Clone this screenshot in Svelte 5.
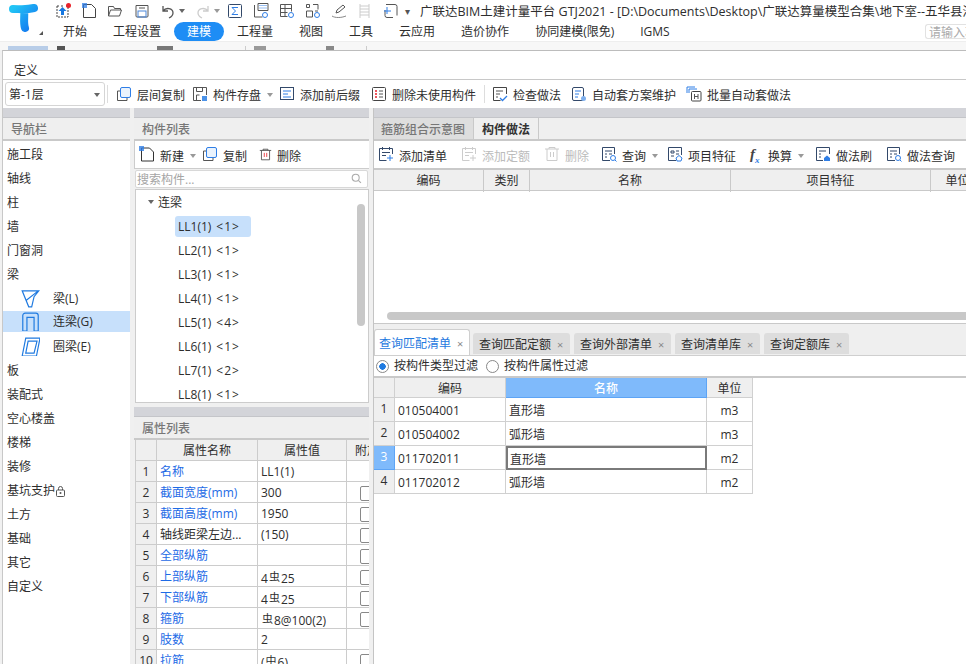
<script>
  const icon = {
    up: '<path d="M2 3h2M6 3h3M11 3h2M2 3v11h11V3" fill="none" stroke="#444" stroke-dasharray="2 1"/><path d="M7.500 4l4 4H9v4H6V8H3.500z" fill="#1677e0"/><circle cx="13.500" cy="2.500" r="2.500" fill="#e8212a"/>',
    file: '<path d="M2.500 1.500h8l4 4v9h-12z" fill="none" stroke="#444"/><rect x="1" y="0" width="5" height="5" fill="#2f7ee6" opacity=".75"/>',
    folder: '<path d="M1.500 13V3.500h5l1 2h6V7M1.500 13l2-6h11l-2 6z" fill="none" stroke="#555"/>',
    save: '<path d="M2 2.500h12v10.500a1 1 0 0 1-1 1H3a1 1 0 0 1-1-1z" fill="none" stroke="#555"/><rect x="4" y="8" width="8" height="6" fill="none" stroke="#4b86d8"/><path d="M5 5h6" stroke="#555"/>',
    undo: '<path d="M3 3v5h5M3 8c3-4 10-3 10 2 0 2-2 4-4 5" fill="none" stroke="#555" stroke-width="1.300"/>',
    redo: '<path d="M13 3v5H8M13 8C10 4 3 5 3 10c0 2 2 4 4 5" fill="none" stroke="#ccc" stroke-width="1.300"/>',
    sigma: '<rect x="1.500" y="1.500" width="13" height="13" rx="1" fill="none" stroke="#33496a"/><path d="M11 4.500H5l3.500 3.500L5 11.500h6" fill="none" stroke="#2f7ee6"/>',
    calc: '<path d="M1.500 2v12h8M5 .5h10v7H5z" fill="none" stroke="#555"/><path d="M6.500 2.500h7M6.500 5h7" stroke="#2f7ee6" stroke-dasharray="1 1"/><circle cx="12" cy="12" r="2.500" fill="none" stroke="#2f7ee6"/>',
    grid: '<path d="M1.500 1.500h11v7M1.500 1.500v12h7M1.500 5.500h11M1.500 9.500h7M6 1.500v12" fill="none" stroke="#555"/><circle cx="12" cy="12" r="2.500" fill="none" stroke="#2f7ee6"/>',
    tree: '<path d="M8 1.500h5v5M1.500 8h6v6h-6zM1.500 1.500h3v3h-3zM10 8h3" fill="none" stroke="#555"/><circle cx="12" cy="12" r="2.500" fill="none" stroke="#2f7ee6"/>',
    pen: '<path d="M1 13c3 2 9 2 14 0" fill="none" stroke="#888"/><path d="M5 10l1-3 6-5 2 2-6 5z" fill="none" stroke="#555"/>',
    ladder: '<path d="M3 1v14M12 1v14M3 3h9M3 6h9M3 9h9M3 12h9" fill="none" stroke="#ccc"/>',
    crop: '<path d="M3 1.500h9a2 2 0 0 1 2 2v9M10 14.500H4a2 2 0 0 1-2-2V7" fill="none" stroke="#555"/><path d="M4 4v7M1 8h7" stroke="#2f7ee6"/>',
    copy2: '<rect x="4.500" y="1.500" width="10" height="10" rx="1.500" fill="#eaf3fd" stroke="#2f7ee6"/><path d="M4 5H1.500v9.500H11V12" fill="none" stroke="#555"/>',
    store: '<path d="M9 14.500H1.500v-13h13V9M4.500 1.500v4h6v-4M4.500 14.500V9h3" fill="none" stroke="#555"/><rect x="10" y="10" width="5" height="5" fill="#4b92e8"/>',
    prefix: '<rect x="1.500" y="1.500" width="13" height="12" fill="none" stroke="#33496a"/><path d="M4 5h8M4 8h5M4 11h8" stroke="#2f7ee6"/>',
    unused: '<rect x="1.500" y="1.500" width="13" height="13" rx="1" fill="none" stroke="#444"/><path d="M4 5h2M4 8h2M4 11h2" stroke="#e8212a" stroke-width="1.500"/><path d="M8 5h4M8 8h4M8 11h4" stroke="#555"/>',
    check: '<path d="M14.500 8V1.500h-13v13h7" fill="none" stroke="#444"/><path d="M4 5h7M4 8h4M4 11h2" stroke="#555"/><path d="M8 12l2.500 2.500L15 10" fill="none" stroke="#2f7ee6" stroke-width="1.300"/>',
    auto: '<rect x="1.500" y="1.500" width="11" height="13" rx="1.500" fill="none" stroke="#33496a"/><path d="M4 5h6M4 8h4M4 11h3" stroke="#2f7ee6"/><circle cx="12.500" cy="12.500" r="2.500" fill="#7fb0ee"/>',
    batch: '<path d="M1 7V1h8M3 7V3h8" fill="none" stroke="#2f7ee6"/><rect x="5.500" y="5.500" width="9.500" height="9.500" rx="1" fill="none" stroke="#444"/><path d="M8.500 8v5M12 8v5M8.500 10.500H12" stroke="#555"/>',
    newfile: '<path d="M2.500 2h8l4 4v9h-12z" fill="none" stroke="#333"/><rect x="0" y="0" width="5" height="5" fill="#2f7ee6" opacity=".8"/>',
    del: '<path d="M1 3h14M5 3V1.500h6V3M3 3v11.500h10V3" fill="none" stroke="#444"/><path d="M6.500 6v5M9.500 6v5" stroke="#e8212a"/>',
    addlist: '<path d="M14.500 8V2.500h-13v12h7M4.500 1v3M11.500 1v3M4 6.500h8M4 9.500h4" fill="none" stroke="#33496a"/><path d="M12 9v6M9 12h6" stroke="#2f7ee6"/>',
    addgrey: '<path d="M14.500 8V2.500h-13v12h7M4.500 1v3M11.500 1v3M4 6.500h8M4 9.500h4M12 9v6M9 12h6" fill="none" stroke="#ccc"/>',
    delgrey: '<path d="M1 3h14M5 3V1.500h6V3M3 3v11.500h10V3M6.500 6v5M9.500 6v5" fill="none" stroke="#ccc"/>',
    query: '<path d="M9 14.500H1.500v-13h12V8M4 5h7M4 8h2M8 8h3M4 11h2" fill="none" stroke="#33496a"/><circle cx="12" cy="12" r="2.500" fill="none" stroke="#2f7ee6"/><path d="M14 14l1.500 1.500" stroke="#2f7ee6"/>',
    feature: '<path d="M9 14.500H1.500v-13h13V9M4 5h3v2H4zM4 10h3M9 5h3M9 8h3" fill="none" stroke="#33496a"/><path d="M12 9.500l3 2.500-1 3h-4l-1-3z" fill="none" stroke="#2f7ee6"/>',
    brush: '<path d="M8 14.500H1.500v-13h13V8M4 5h7M4 8h2M4 11h2" fill="none" stroke="#33496a"/><path d="M9 15v-3l3-2.500 3 2.500v3z" fill="#2f7ee6"/>',
    beam: '<path d="M1 1.500h14L11 6.500 9 15H6.500L1 1.500zM4.500 9.500L14 2" fill="none" stroke="#1f7ae0" stroke-width="1"/>',
    lintel: '<path d="M1.500 16V3a2 2 0 0 1 2-2h9a2 2 0 0 1 2 2v13h-3.500V4.500h-6V16z" fill="none" stroke="#1f7ae0" stroke-width="1"/>',
    ring: '<path d="M4 1h12l-3 15H1zM6 3.500h7.500L11 13.500H4z" fill="none" stroke="#1f7ae0" stroke-width="1"/>',
    search: '<circle cx="6.500" cy="6.500" r="4" fill="none" stroke="#aaa" stroke-width="1.200"/><path d="M9.500 9.500l3 3" stroke="#aaa" stroke-width="1.200"/>'
  }

  const quick = [
    ['up', 0], ['file', 10], ['folder', 10], ['save', 11],
    ['undo', 10, 1], ['redo', 10, 1, 1], ['sigma', 7], ['calc', 10],
    ['grid', 10], ['tree', 10], ['pen', 10], ['ladder', 10], ['crop', 10]
  ]
  const menu = ['开始', '工程设置', '建模', '工程量', '视图', '工具', '云应用', '造价协作', '协同建模(限免)', 'IGMS']
  const stubs = [[8, 40, '#b8cde8'], [9, 8, '#555'], [92, 16, '#777'], [72, 1, '#ccc'], [8, 12, '#999'], [60, 8, '#888'], [32, 1, '#ccc']]

  const tools = [
    { i: 'copy2', t: '层间复制', m: 0 },
    { i: 'store', t: '构件存盘', m: 7, caret: 1 },
    { i: 'prefix', t: '添加前后缀', m: 8 },
    { i: 'unused', t: '删除未使用构件', m: 11, sep: 1 },
    { i: 'check', t: '检查做法', m: 0 },
    { i: 'auto', t: '自动套方案维护', m: 10 },
    { i: 'batch', t: '批量自动套做法', m: 10 }
  ]
  const nav = ['施工段', '轴线', '柱', '墙', '门窗洞', '梁']
  const navSub = [['beam', '梁(L)'], ['lintel', '连梁(G)', 1], ['ring', '圈梁(E)']]
  const nav2 = ['板', '装配式', '空心楼盖', '楼梯', '装修']
  const nav3 = ['土方', '基础', '其它', '自定义']
  const lintels = [[1, 1], [2, 1], [3, 1], [4, 1], [5, 4], [6, 1], [7, 2], [8, 1]]

  const props = [
    ['名称', 'LL1(1)', 1, 0],
    ['截面宽度(mm)', '300', 1, 1],
    ['截面高度(mm)', '1950', 1, 1],
    ['轴线距梁左边...', '(150)', 0, 1],
    ['全部纵筋', '', 1, 1],
    ['上部纵筋', '4|25', 1, 1],
    ['下部纵筋', '4|25', 1, 1],
    ['箍筋', '|8@100(2)', 1, 1],
    ['肢数', '2', 1, 0],
    ['拉筋', '(|6)', 1, 1, '中']
  ]
  const rtools = [
    { i: 'addlist', t: '添加清单', m: 4 },
    { i: 'addgrey', t: '添加定额', m: 14, off: 1 },
    { i: 'delgrey', t: '删除', m: 14, off: 1 },
    { i: 'query', t: '查询', m: 12, caret: 1 },
    { i: 'feature', t: '项目特征', m: 11 },
    { fx: 1, t: '换算', m: 14, caret: 1 },
    { i: 'brush', t: '做法刷', m: 13 },
    { i: 'query', t: '做法查询', m: 14 }
  ]
  const tabs = ['查询匹配定额', '查询外部清单', '查询清单库', '查询定额库']
  const rows = [
    ['010504001', '直形墙', 'm3'],
    ['010504002', '弧形墙', 'm3'],
    ['011702011', '直形墙', 'm2'],
    ['011702012', '弧形墙', 'm2']
  ]
</script>

{#snippet ico(name, size = 16)}
  <svg class="ico" width={size} height={size} viewBox="0 0 16 16">{@html icon[name]}</svg>
{/snippet}

<div class="app">
  <header class="top">
    <div class="logo">
      <svg width="34" height="34" viewBox="0 0 34 34">
        <defs>
          <linearGradient id="tg" x1="0" y1="0" x2="1" y2="1">
            <stop offset="0" stop-color="#21c4f5" />
            <stop offset="1" stop-color="#1478f0" />
          </linearGradient>
        </defs>
        <path d="M7 8c7 0 13 1 21-1M18 9c1 6-1 12 1 18" fill="none" stroke="url(#tg)" stroke-width="8" stroke-linecap="round" />
      </svg>
      <i class="corner"></i>
    </div>
    <div class="top-main">
      <div class="quick">
        {#each quick as q}
          <span class="qi" style="margin-left:{q[1]}px">
            {@render ico(q[0])}
            {#if q[2]}<i class="caret" class:light={q[3]}></i>{/if}
          </span>
        {/each}
        <span class="qdrop">▾</span>
        <span class="title">广联达BIM土建计量平台 GTJ2021 - [D:\Documents\Desktop\广联达算量模型合集\地下室--五华县河源中学项目</span>
      </div>
      <nav class="menu">
        {#each menu as m}
          <span class="mi" class:on={m === '建模'}>{m}</span>
        {/each}
        <span class="find">请输入功能</span>
      </nav>
    </div>
  </header>

  <div class="ribbon">
    {#each stubs as s}
      <i style="margin-left:{s[0]}px;width:{s[1]}px;background:{s[2]}"></i>
    {/each}
  </div>

  <section class="dialog">
    <div class="dtitle">定义</div>
    <div class="dbar">
      <div class="floor"><span>第-1层</span><i class="caret"></i></div>
      <i class="vsep first"></i>
      {#each tools as t}
        <span class="tool" style="margin-left:{t.m}px">
          {@render ico(t.i)}<span>{t.t}</span>
          {#if t.caret}<i class="caret light"></i>{/if}
        </span>
        {#if t.sep}<i class="vsep"></i>{/if}
      {/each}
    </div>

    <div class="work">
      <aside class="col nav">
        <div class="band"></div>
        <div class="head">导航栏</div>
        <ul class="navlist">
          {#each nav as n}<li>{n}</li>{/each}
          {#each navSub as s}
            <li class="sub" class:sel={s[2]}>{@render ico(s[0], 19)}<span>{s[1]}</span></li>
          {/each}
          {#each nav2 as n}<li>{n}</li>{/each}
          <li class="locked">基坑支护
            <svg width="9" height="11" viewBox="0 0 9 11"><rect x=".5" y="4" width="8" height="6.500" rx="1" fill="none" stroke="#555" /><path d="M2.500 4V2.500a2 2 0 0 1 4 0V4" fill="none" stroke="#555" /><circle cx="4.500" cy="7" r="1" fill="#555" /></svg>
          </li>
          {#each nav3 as n}<li>{n}</li>{/each}
        </ul>
      </aside>

      <div class="col mid">
        <div class="upper">
          <div class="band"></div>
          <div class="head">构件列表</div>
          <div class="listbar">
            <span class="tool">{@render ico('newfile')}<span>新建</span><i class="caret light"></i></span>
            <span class="tool">{@render ico('copy2')}<span>复制</span></span>
            <span class="tool">{@render ico('del', 13)}<span>删除</span></span>
          </div>
          <div class="searchbox"><span>搜索构件...</span>{@render ico('search', 14)}</div>
          <div class="tree">
            <div class="root"><i class="caret"></i><span>连梁</span></div>
            {#each lintels as l}
              <div class="leaf"><span class:sel={l[0] === 1}>LL{l[0]}(1)<em>&lt;{l[1]}&gt;</em></span></div>
            {/each}
            <i class="vbar"></i>
          </div>
        </div>

        <div class="lower">
          <div class="band"></div>
          <div class="head">属性列表</div>
          <div class="ptable">
            <div class="pc hd"></div>
            <div class="pc hd">属性名称</div>
            <div class="pc hd">属性值</div>
            <div class="pc hd clip">附加</div>
            {#each props as p, n}
              <div class="pc hd">{n + 1}</div>
              <div class="pc txt" class:blue={p[2]}>{p[0]}</div>
              <div class="pc txt">
                {#if p[1].includes('|')}
                  {p[1].split('|')[0]}<span class="steel">{p[4] || '虫'}</span>{p[1].split('|')[1]}
                {:else}{p[1]}{/if}
              </div>
              <div class="pc box">{#if p[3]}<i></i>{/if}</div>
            {/each}
          </div>
        </div>
      </div>

      <main class="col right">
        <div class="band"></div>
        <div class="rtabs">
          <span class="rtab">箍筋组合示意图</span>
          <span class="rtab on">构件做法</span>
        </div>
        <div class="rbar">
          {#each rtools as t}
            <span class="tool" class:off={t.off} style="margin-left:{t.m}px">
              {#if t.fx}<b class="fx">f<sub>x</sub></b>{:else}{@render ico(t.i)}{/if}
              <span>{t.t}</span>
              {#if t.caret}<i class="caret light"></i>{/if}
            </span>
          {/each}
        </div>
        <div class="grid1">
          <div class="ghead">
            <span>编码</span><span>类别</span><span>名称</span><span>项目特征</span><span>单位</span><span></span>
          </div>
          <div class="gbody"><i class="hbar"></i></div>
        </div>

        <div class="qtabs">
          <span class="qtab on">查询匹配清单<b>×</b></span>
          {#each tabs as t}<span class="qtab">{t}<b>×</b></span>{/each}
        </div>
        <div class="filter">
          <label><i class="radio on"></i>按构件类型过滤</label>
          <label><i class="radio"></i>按构件属性过滤</label>
        </div>
        <div class="qtable">
          <div class="qc hd"></div>
          <div class="qc hd">编码</div>
          <div class="qc hd act">名称</div>
          <div class="qc hd">单位</div>
          {#each rows as r, n}
            <div class="qc hd" class:act={n === 2}>{n + 1}</div>
            <div class="qc left">{r[0]}</div>
            <div class="qc left" class:cur={n === 2}>{r[1]}</div>
            <div class="qc">{r[2]}</div>
          {/each}
        </div>
      </main>
    </div>
  </section>
</div>

<style>
  :global(body) {
    margin: 0;
    overflow: hidden;
  }
  .app {
    width: 966px;
    height: 664px;
    overflow: hidden;
    display: flex;
    flex-direction: column;
    background: #f1f1f1;
    color: #2e2e2e;
    font: 12px/1.2 "Open Sans", "Noto Sans CJK SC", sans-serif;
  }
  i {
    display: block;
  }
  .ico {
    display: block;
    flex: none;
  }
  .caret {
    width: 0;
    height: 0;
    flex: none;
    border: 3.5px solid transparent;
    border-top: 4px solid #666;
    border-bottom: 0;
  }
  .caret.light {
    border-top-color: #999;
  }

  .top {
    height: 41px;
    background: #fff;
    display: flex;
    flex: none;
  }
  .logo {
    width: 50px;
    flex: none;
    padding: 1px 0 0 6px;
    box-sizing: border-box;
    position: relative;
  }
  .corner {
    position: absolute;
    left: 39px;
    top: 31px;
    border: 2.500px solid transparent;
    border-right-color: #555;
    border-bottom-color: #555;
  }
  .top-main {
    flex: 1;
    min-width: 0;
  }
  .quick {
    height: 22px;
    display: flex;
    align-items: center;
    padding-left: 5px;
    white-space: nowrap;
    overflow: hidden;
  }
  .qi {
    display: flex;
    align-items: center;
    gap: 3px;
  }
  .qdrop {
    width: 8px;
    margin-left: 6px;
    font-size: 10px;
    color: #555;
  }
  .title {
    margin-left: 10px;
    font-size: 12.500px;
  }
  .menu {
    height: 19px;
    display: flex;
    align-items: center;
  }
  .mi {
    height: 19px;
    line-height: 19px;
    padding: 0 13px;
    white-space: nowrap;
  }
  .mi.on {
    background: #1e8df5;
    color: #fff;
    border-radius: 10px;
  }
  .find {
    margin-left: auto;
    width: 41px;
    height: 15px;
    line-height: 15px;
    box-sizing: border-box;
    border: 1px solid #e2e2e2;
    border-right: 0;
    border-radius: 3px 0 0 3px;
    padding-left: 3px;
    color: #aaa;
    overflow: hidden;
    white-space: nowrap;
  }

  .ribbon {
    height: 9px;
    flex: none;
    background: #f7f7f7;
    border-top: 1px solid #eee;
    box-sizing: border-box;
    display: flex;
    align-items: flex-end;
  }
  .ribbon i {
    height: 4px;
    flex: none;
  }

  .dialog {
    flex: 1;
    min-height: 0;
    margin-left: 2px;
    border-top: 1px solid #bcbcbc;
    border-left: 1px solid #c8c8c8;
    background: #fff;
    display: flex;
    flex-direction: column;
  }
  .dtitle {
    height: 28px;
    flex: none;
    box-sizing: border-box;
    padding: 13px 0 0 11px;
    font-size: 12px;
  }
  .dbar {
    height: 29px;
    flex: none;
    box-sizing: border-box;
    border-top: 1px solid #c8c8c8;
    display: flex;
    align-items: center;
    padding-left: 2px;
  }
  .floor {
    width: 100px;
    height: 24px;
    box-sizing: border-box;
    border: 1px solid #d5d5d5;
    border-radius: 3px;
    display: flex;
    align-items: center;
    justify-content: space-between;
    padding: 2px 4px 0 3px;
    flex: none;
  }
  .vsep {
    width: 1px;
    height: 18px;
    background: #ddd;
    flex: none;
    margin: 0 7px 0 8px;
  }
  .vsep.first {
    margin: 0 8px 0 2px;
  }
  .tool {
    display: flex;
    align-items: center;
    gap: 5px;
    white-space: nowrap;
    flex: none;
  }
  .tool span {
    padding-top: 5px;
  }
  .tool .caret {
    margin-left: 1px;
    margin-right: -2px;
    margin-top: 3px;
  }
  .tool.off {
    color: #bbb;
  }

  .work {
    flex: 1;
    min-height: 0;
    display: flex;
    background: #f0f0f0;
    gap: 4px;
  }
  .col {
    flex: none;
    display: flex;
    flex-direction: column;
    min-height: 0;
  }
  .band {
    height: 10px;
    flex: none;
    background: #d3d4d9;
    border-bottom: 1px solid #c4c5c9;
    box-sizing: border-box;
  }
  .head {
    height: 23px;
    flex: none;
    box-sizing: border-box;
    padding-left: 8px;
    line-height: 24px;
    color: #777;
    font-weight: 500;
    background: #efefef;
    border-bottom: 2px solid #c9c9c9;
  }

  .nav {
    width: 127px;
    background: #fff;
  }
  .navlist {
    list-style: none;
    margin: 0;
    padding: 1px 0 0;
    background: #fff;
  }
  .navlist li {
    height: 24px;
    line-height: 26px;
    padding-left: 4px;
    display: flex;
    align-items: flex-start;
  }
  .navlist .sub {
    padding-left: 18px;
    gap: 13px;
  }
  .navlist .sub .ico {
    align-self: center;
  }
  .navlist .sel {
    background: #c7e0fb;
    height: 21px;
    margin: 1px 0 2px;
    line-height: 22px;
  }
  .locked svg {
    margin: 8px 0 0 1px;
  }

  .mid {
    width: 235px;
  }
  .upper {
    height: 295px;
    flex: none;
    display: flex;
    flex-direction: column;
  }
  .listbar {
    height: 28px;
    flex: none;
    background: #fff;
    border-left: 1px solid #ccc;
    border-bottom: 1px solid #ccc;
    display: flex;
    align-items: center;
    padding-left: 4px;
    gap: 8px;
    box-sizing: border-box;
  }
  .listbar .tool + .tool + .tool {
    margin-left: 4px;
  }
  .searchbox {
    height: 18px;
    flex: none;
    margin: 1px;
    box-sizing: border-box;
    background: #fff;
    border: 1px solid #d8d8d8;
    border-radius: 2px;
    display: flex;
    align-items: center;
    justify-content: space-between;
    padding: 0 3px 0 1px;
    color: #a5a5a5;
  }
  .searchbox span {
    padding-top: 3px;
  }
  .tree {
    flex: 1;
    min-height: 0;
    margin-left: 1px;
    background: #fff;
    border: 1px solid #ccc;
    overflow: hidden;
    position: relative;
  }
  .root {
    height: 24px;
    display: flex;
    align-items: center;
    gap: 4px;
    padding-left: 12px;
  }
  .root span {
    padding-top: 2px;
  }
  .leaf {
    height: 24px;
    display: flex;
    align-items: center;
    padding-left: 39px;
  }
  .leaf span {
    height: 21px;
    line-height: 21px;
    width: 73px;
    padding-left: 3px;
    border-radius: 3px;
  }
  .leaf span.sel {
    background: #c7e0fb;
  }
  .leaf em {
    font-style: normal;
    margin-left: 5px;
    letter-spacing: 1px;
  }
  .vbar {
    position: absolute;
    right: 3px;
    top: 14px;
    width: 8px;
    height: 122px;
    border-radius: 4px;
    background: #c8c8c8;
  }

  .lower {
    margin-top: 4px;
    flex: 1;
    min-height: 0;
    overflow: hidden;
    display: flex;
    flex-direction: column;
  }
  .ptable {
    display: grid;
    grid-template-columns: 21px 101px 89px 23px;
    grid-auto-rows: 21px;
    margin-left: 1px;
    background: #fff;
    border-left: 1px solid #ccc;
  }
  .pc {
    box-sizing: border-box;
    border-right: 1px solid #ccc;
    border-bottom: 1px solid #ccc;
    line-height: 22px;
    white-space: nowrap;
    overflow: hidden;
  }
  .pc.hd {
    background: #efefef;
    text-align: center;
  }
  .pc.clip {
    text-align: left;
    padding-left: 8px;
  }
  .pc.txt {
    padding-left: 3px;
  }
  .pc.blue {
    color: #1e6be6;
  }
  .pc.box i {
    width: 13px;
    height: 13px;
    margin: 4px 0 0 13px;
    border: 1px solid #888;
    border-radius: 2px;
  }
  .steel {
    font-size: 11px;
    vertical-align: 2px;
    margin: 0 1px;
  }

  .right {
    flex: 1;
    min-width: 0;
    border-left: 1px solid #c4c4c4;
    background: #fff;
  }
  .rtabs {
    height: 23px;
    flex: none;
    box-sizing: border-box;
    display: flex;
    background: #efefef;
    border-bottom: 2px solid #c9c9c9;
  }
  .rtab {
    padding-left: 7px;
    width: 100px;
    box-sizing: border-box;
    line-height: 23px;
    color: #777;
    background: #dedede;
    border-right: 1px solid #c9c9c9;
    font-weight: 500;
  }
  .rtab.on {
    width: 65px;
    padding-left: 8px;
    background: #efefef;
    color: #333;
    font-weight: 700;
  }
  .rbar {
    height: 27px;
    flex: none;
    display: flex;
    align-items: center;
    background: #fff;
    white-space: nowrap;
  }
  .fx {
    width: 13px;
    font: italic 700 15px/16px "Liberation Serif", serif;
    color: #444;
  }
  .fx sub {
    font-size: 9px;
    color: #2f7ee6;
    line-height: 0;
  }
  .grid1 {
    height: 156px;
    flex: none;
    display: flex;
    flex-direction: column;
    border-top: 2px solid #c9c9c9;
    border-bottom: 1px solid #c9c9c9;
    box-sizing: border-box;
  }
  .ghead {
    height: 20px;
    flex: none;
    display: grid;
    grid-template-columns: 110px 46px 201px 200px 54px 1fr;
    background: #efefef;
    border-bottom: 1px solid #c9c9c9;
  }
  .ghead span {
    line-height: 22px;
    text-align: center;
    border-right: 1px solid #c9c9c9;
  }
  .gbody {
    flex: 1;
    display: flex;
    align-items: flex-end;
    padding: 0 0 3px 13px;
  }
  .hbar {
    flex: 1;
    height: 8px;
    border-radius: 4px 0 0 4px;
    background: #c8c8c8;
  }

  .qtabs {
    height: 31px;
    flex: none;
    box-sizing: border-box;
    display: flex;
    align-items: flex-end;
    gap: 4px;
    background: #efefef;
  }
  .qtab {
    height: 21px;
    line-height: 23px;
    padding: 0 6px;
    background: #dddddd;
    border-radius: 3px 3px 0 0;
    white-space: nowrap;
    display: flex;
    gap: 6px;
    margin-bottom: 1px;
  }
  .qtab b {
    width: 7px;
    font-weight: 400;
    color: #888;
    font-size: 11px;
  }
  .qtab.on {
    height: 26px;
    line-height: 27px;
    margin: 0 -1px 0 0;
    width: 96px;
    box-sizing: border-box;
    padding: 0 4px;
    background: #fff;
    color: #1f7ae0;
    border: 1px solid #cfcfcf;
    border-bottom: 0;
  }
  .filter {
    height: 23px;
    flex: none;
    box-sizing: border-box;
    display: flex;
    align-items: center;
    gap: 8px;
    padding-left: 2px;
    border-top: 1px solid #cfcfcf;
    border-bottom: 2px solid #c9c9c9;
  }
  .filter label {
    display: flex;
    align-items: center;
    gap: 5px;
    line-height: 22px;
  }
  .radio {
    width: 13px;
    height: 13px;
    box-sizing: border-box;
    border: 1px solid #888;
    border-radius: 50%;
    background: #fff;
  }
  .radio.on {
    background: radial-gradient(circle, #1f7ae0 0 3px, #fff 3.5px);
  }
  .qtable {
    display: grid;
    grid-template-columns: 21px 111px 201px 46px;
    grid-template-rows: 20px repeat(4, 24px);
    width: 379px;
  }
  .qc {
    box-sizing: border-box;
    border-right: 1px solid #d0d0d0;
    border-bottom: 1px solid #d0d0d0;
    text-align: center;
    line-height: 25px;
    background: #fff;
  }
  .qc.hd {
    background: #efefef;
    line-height: 22px;
  }
  .qc.left {
    text-align: left;
    padding-left: 3px;
  }
  .qc.act {
    background: #7fbafb;
    color: #fff;
    font-weight: 500;
    border-color: #5da4f5;
  }
  .qc.cur {
    border: 2px solid #7a7a7a;
    padding-left: 2px;
    line-height: 23px;
  }
</style>
